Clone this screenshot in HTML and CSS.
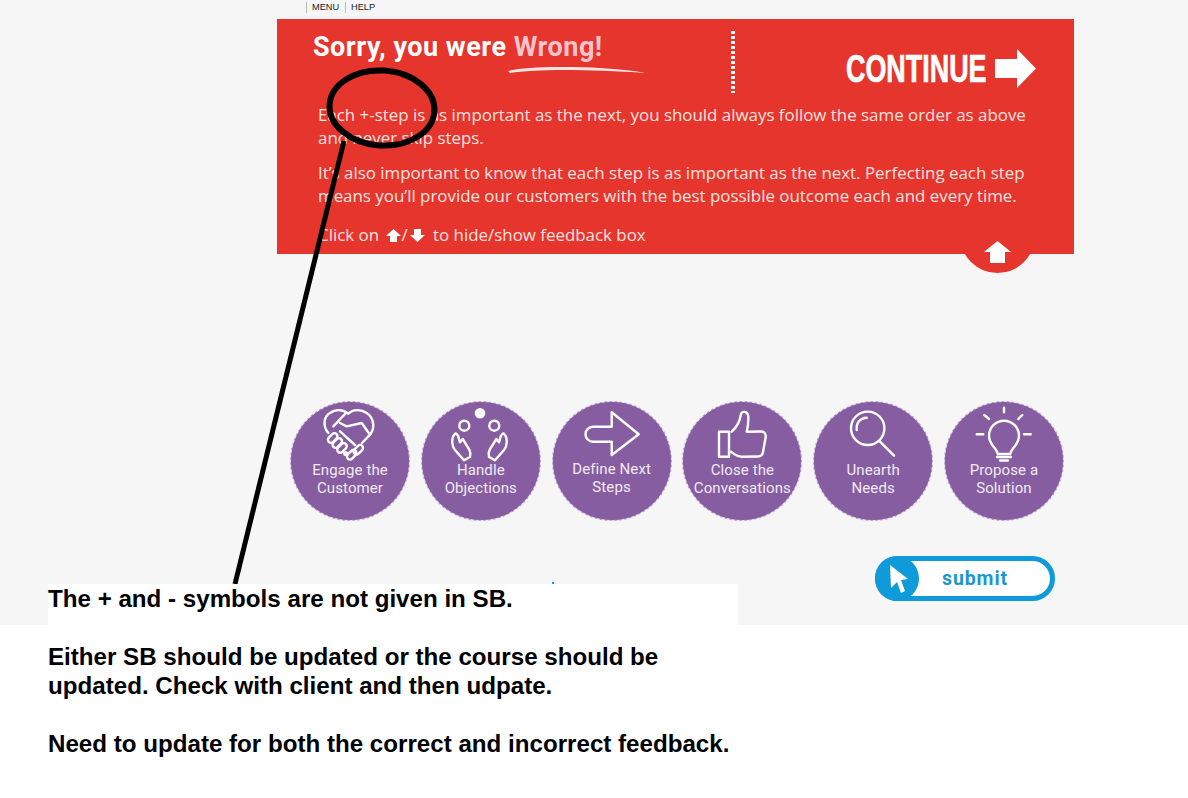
FILE: index.html
```html
<!DOCTYPE html>
<html lang="en">
<head>
  <meta charset="UTF-8" />
  <title>Feedback review</title>
  <link rel="stylesheet" href="styles.css">
</head>
<body>
  <div class="stage">
    <div class="course">
      <nav class="topnav">
        <a class="nav-link">MENU</a>
        <a class="nav-link">HELP</a>
      </nav>

      <section class="feedback">
        <div class="feedback-top">
          <div class="title-wrap">
            <h1 class="title">Sorry, you were <span class="title-wrong">Wrong!</span></h1>
            <svg class="brush" width="140" height="10" viewBox="0 0 140 10">
              <path d="M0 6 C12 3 30 2 52 2 C80 2 110 3 138 8 C110 6 80 5 56 5 C34 5 14 6 2 8 Z" fill="#fff" opacity=".88"/>
            </svg>
          </div>
          <div class="dots"></div>
          <a class="continue">
            <span class="continue-text">CONTINUE</span>
            <svg width="41" height="39" viewBox="0 0 41 39"><path d="M0 10 H22 V0 L41 19.5 L22 39 V29 H0 Z" fill="#fff"/></svg>
          </a>
        </div>
        <div class="feedback-body">
          <p>Each +-step is as important as the next, you should always follow the same order as above and never skip steps.</p>
          <p>It’s also important to know that each step is as important as the next. Perfecting each step means you’ll provide our customers with the best possible outcome each and every time.</p>
          <p class="hint">Click on
            <svg class="hint-icon hint-up" width="15" height="13" viewBox="0 0 15 13"><path d="M7.500 0 L15 7 H11 V13 H4 V7 H0 Z" fill="#fff"/></svg>/<svg class="hint-icon hint-down" width="15" height="13" viewBox="0 0 15 13"><path d="M7.500 13 L15 6 H11 V0 H4 V6 H0 Z" fill="#fff"/></svg>
            to hide/show feedback box</p>
        </div>
        <div class="toggle">
          <svg width="27" height="22" viewBox="0 0 27 22"><path d="M13.500 0 L27 11 H21 V22 H6 V11 H0 Z" fill="#fff"/></svg>
        </div>
      </section>

      <div class="steps">
        <div class="step">
          <svg class="step-icon" width="70" height="54" viewBox="0 0 70 54">
            <path d="M13.300 28 C8 22 8 12 15 8 C20 4 28 4 33.300 8.700 C38 4 46 4 51.700 8 C58 12 61 22 55 29.700"/>
            <path d="M18.300 21.300 L31 8"/>
            <path d="M25 18 L31.700 21.300 L46.700 18 L55 29.700 L47 38"/>
            <path d="M25 26.300 L40 40"/>
            <rect x="12.200" y="30" width="11" height="6" rx="3" transform="rotate(-45 17.700 33)"/>
            <rect x="16.800" y="35" width="11" height="6" rx="3" transform="rotate(-45 22.300 38)"/>
            <rect x="21.500" y="40" width="11" height="6" rx="3" transform="rotate(-45 27 43)"/>
            <rect class="solid" x="28" y="46" width="5" height="5" rx="2.500"/>
            <rect x="31.200" y="46.700" width="11" height="6" rx="3" transform="rotate(-45 36.700 49.700)"/>
            <rect x="37.800" y="41.700" width="11" height="6" rx="3" transform="rotate(-45 43.300 44.700)"/>
          </svg>
          <span class="step-label">Engage the<br>Customer</span>
        </div>
        <div class="step">
          <svg class="step-icon" width="70" height="54" viewBox="0 0 70 54">
            <circle class="solid" cx="34" cy="8.300" r="5.300"/>
            <circle cx="18.300" cy="20.700" r="5"/>
            <circle cx="48.300" cy="20.700" r="5"/>
            <path d="M9 28.700 C6 32 6 37 6.700 40 C7 43 8 44 9 45 L18 55.300 L24 52 C25 49 24 46 23.300 44.700 L16.700 34 L14 37.300 L12.300 31.300 C11.500 29.500 10 28 9 28.700 Z"/>
            <path transform="matrix(-1 0 0 1 67 0)" d="M9 28.700 C6 32 6 37 6.700 40 C7 43 8 44 9 45 L18 55.300 L24 52 C25 49 24 46 23.300 44.700 L16.700 34 L14 37.300 L12.300 31.300 C11.500 29.500 10 28 9 28.700 Z"/>
          </svg>
          <span class="step-label">Handle<br>Objections</span>
        </div>
        <div class="step step-raised">
          <svg class="step-icon" width="70" height="54" viewBox="0 0 70 54">
            <path d="M16 21.700 H34.700 V7.300 L61.700 29.300 L34.700 50 V36.700 H16 A7.500 7.500 0 0 1 16 21.700Z"/>
          </svg>
          <span class="step-label">Define Next<br>Steps</span>
        </div>
        <div class="step">
          <svg class="step-icon" width="70" height="54" viewBox="0 0 70 54">
            <rect x="12" y="26.700" width="10" height="25"/>
            <path d="M24.700 26.700 C30 22 33 16 34 9 C35 6 40 6 41 10 C42 15 41 21 39.700 26.700 L54 26.500 C57.500 26.500 59 29 58.700 32 L56 47 C55.500 50 54 51.500 51 51.500 L34.700 51.700 C30 51.700 27 49 24 46.700"/>
          </svg>
          <span class="step-label">Close the<br>Conversations</span>
        </div>
        <div class="step">
          <svg class="step-icon" width="70" height="54" viewBox="0 0 70 54">
            <circle cx="29.700" cy="23.300" r="16.700"/>
            <path d="M42 36.700 L56 50.700"/>
            <path d="M18.700 25 C18 18 22 13 28.700 12.700"/>
          </svg>
          <span class="step-label">Unearth<br>Needs</span>
        </div>
        <div class="step">
          <svg class="step-icon" width="70" height="54" viewBox="0 0 70 54">
            <path d="M28.700 49 C28 43 20 40 20 30.700 A15 15 0 0 1 50 30.700 C50 40 42 43 41.300 49 Z"/>
            <path d="M28 52 H42 M31 55.500 H39"/>
            <path d="M35 2.700 V7.300 M15.300 10 L20 14 M53.300 10 L49.300 14 M7.700 29.300 H14.300 M55 29.300 H61.700"/>
          </svg>
          <span class="step-label">Propose a<br>Solution</span>
        </div>
      </div>

      <a class="submit">
        <span class="submit-cursor">
          <svg width="18" height="28" viewBox="0 0 18 28"><path d="M0 0 L18 14 L11 15 L15 26 L11 28 L7 17 L1 23 Z" fill="#fff"/></svg>
        </span>
        <span class="submit-text">submit</span>
      </a>
    </div>
    <i class="stray-mark"></i>
  </div>

  <svg class="markup" width="1188" height="625" viewBox="0 0 1188 625">
    <ellipse cx="382" cy="108" rx="52.500" ry="37.500" stroke-width="6" transform="rotate(4 382 108)"/>
    <path d="M344 141 L235 584"/>
  </svg>

  <div class="note">
    <p>The + and - symbols are not given in SB.</p>
    <p>Either SB should be updated or the course should be<br>updated. Check with client and then udpate.</p>
    <p>Need to update for both the correct and incorrect feedback.</p>
  </div>
</body>
</html>
```

FILE: styles.css
```css
body {
  margin: 0;
  background: #fff;
  font-family: 'Open Sans', sans-serif;
  height: 798px;
  overflow: hidden;
  position: relative;
}
p {
  margin: 0;
}
.stage {
  height: 625px;
  background: #f6f6f6;
  position: relative;
}
.course {
  width: 797px;
  margin-left: 277px;
  display: flex;
  flex-direction: column;
}
.topnav {
  height: 19px;
  padding: 2px 0 0 29px;
  box-sizing: border-box;
  display: flex;
  align-items: flex-start;
  gap: 6px;
}
.nav-link {
  font-family: 'Liberation Sans', Arial, sans-serif;
  font-size: 9.2px;
  line-height: 11px;
  color: #222;
  padding-left: 5px;
  border-left: 1px solid #bbb;
}

/* feedback panel */
.feedback {
  height: 235px;
  background: #e5352c;
  color: #fff;
  position: relative;
  box-sizing: border-box;
  padding: 12px 38px 0 36px;
}
.feedback-top {
  display: flex;
  height: 62px;
}
.title-wrap {
  width: 418px;
  position: relative;
}
.title {
  margin: 0;
  font-family: Roboto, sans-serif;
  font-weight: 700;
  font-size: 27px;
  line-height: 32px;
  letter-spacing: .5px;
}
.title-wrong {
  color: #fdc3cb;
}
.brush {
  position: absolute;
  left: 195px;
  top: 34px;
}
.dots {
  width: 4px;
  height: 62px;
  background: repeating-linear-gradient(to bottom, #fff 0, #fff 3px, transparent 3px, transparent 5px);
}
.continue {
  margin-left: auto;
  margin-top: 18px;
  height: 39px;
  display: flex;
  align-items: center;
  gap: 8px;
}
.continue-text {
  width: 141px;
  font-family: 'Liberation Sans', sans-serif;
  font-weight: 700;
  font-size: 39px;
  line-height: 39px;
  white-space: nowrap;
  transform: scaleX(.69);
  transform-origin: left center;
  -webkit-text-stroke: .7px #fff;
}
.feedback-body {
  margin: 10px 0 0 5px;
  font-size: 16.9px;
  line-height: 23px;
  color: #fbe3e0;
  position: relative;
  z-index: 1;
}
.feedback-body p {
  margin-bottom: 12px;
}
.feedback-body .hint {
  margin-top: 16px;
  margin-bottom: 0;
}
.hint-icon {
  vertical-align: -1px;
}
.hint-up {
  margin-left: 3px;
}
.hint-down {
  margin: 0 4px 0 2px;
}
.toggle {
  position: absolute;
  left: 683px;
  bottom: -19px;
  width: 75px;
  height: 75px;
  border-radius: 50%;
  background: #e5352c;
  display: flex;
  align-items: flex-end;
  justify-content: center;
  padding-bottom: 10px;
  box-sizing: border-box;
}

/* step badges */
.steps {
  display: flex;
  gap: 10.8px;
  margin: 147px 0 0 13px;
}
.step {
  width: 120px;
  height: 120px;
  box-sizing: border-box;
  border-radius: 50%;
  background: linear-gradient(#875da1, #875da1) padding-box, linear-gradient(#b295c4, #b295c4) border-box;
  border: 1.5px dashed #e6dcec;
  padding-top: 2.5px;
  display: flex;
  flex-direction: column;
  align-items: center;
  color: #f1eaf4;
  flex-shrink: 0;
}
.step-icon {
  fill: none;
  stroke: #fff;
  stroke-width: 2.4;
  stroke-linecap: round;
  stroke-linejoin: round;
  overflow: visible;
  flex-shrink: 0;
}
.step-icon .solid {
  fill: #fff;
  stroke: none;
}
.step-label {
  margin-top: 2px;
  font-family: Roboto, sans-serif;
  font-weight: 400;
  font-size: 15px;
  line-height: 18px;
  letter-spacing: .1px;
  text-align: center;
  white-space: nowrap;
}
.step-raised .step-label {
  margin-top: 1px;
}

/* submit button */
.submit {
  align-self: flex-end;
  margin: 35px 19px 0 0;
  width: 180px;
  height: 45px;
  box-sizing: border-box;
  border: 5px solid #0f9bd9;
  border-radius: 23px;
  background: #fff;
  display: flex;
  align-items: center;
  position: relative;
}
.submit-cursor {
  position: absolute;
  left: -5px;
  top: -5px;
  width: 44px;
  height: 45px;
  border-radius: 50%;
  background: #0f9bd9;
  display: flex;
  align-items: center;
  justify-content: center;
  box-sizing: border-box;
  padding-left: 4px;
}
.submit-text {
  margin-left: 62px;
  margin-top: -1px;
  font-family: Roboto, sans-serif;
  font-weight: 700;
  font-size: 19.5px;
  letter-spacing: .9px;
  color: #1d96cf;
}
.stray-mark {
  position: absolute;
  left: 552px;
  top: 582px;
  width: 2px;
  height: 2px;
  background: #0f9bd9;
}

/* review markup drawn over the screenshot */
.markup {
  position: absolute;
  left: 0;
  top: 0;
  z-index: 2;
  fill: none;
  stroke: #000;
  stroke-width: 5;
}
.note {
  position: absolute;
  left: 48px;
  top: 584px;
  z-index: 3;
  width: 690px;
  background: #fff;
  font-family: 'Liberation Sans', Arial, sans-serif;
  font-weight: 700;
  font-size: 24.15px;
  line-height: 29px;
  color: #000;
}
.note p {
  margin-bottom: 29px;
}
```
